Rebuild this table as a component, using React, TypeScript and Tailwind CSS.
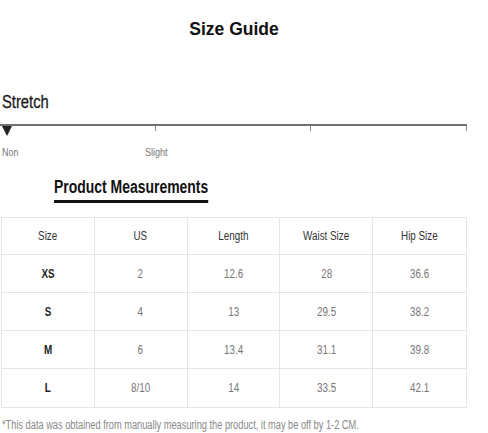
import React from 'react';

type Row = {
  size: string;
  us: string;
  length: string;
  waist: string;
  hip: string;
};

const rows: Row[] = [
  { size: 'XS', us: '2', length: '12.6', waist: '28', hip: '36.6' },
  { size: 'S', us: '4', length: '13', waist: '29.5', hip: '38.2' },
  { size: 'M', us: '6', length: '13.4', waist: '31.1', hip: '39.8' },
  { size: 'L', us: '8/10', length: '14', waist: '33.5', hip: '42.1' },
];

// condensed look: no narrow font installed, so squeeze Liberation Sans
const Cell: React.FC<{ children: React.ReactNode; className?: string }> = ({ children, className }) => (
  <div className="flex items-center justify-center border-r border-[#e6e6e6] last:border-r-0">
    <span className={`inline-block scale-x-[0.82] ${className ?? ''}`}>{children}</span>
  </div>
);

const App: React.FC = () => {
  return (
    <div className="w-[488px] h-[433px] bg-white overflow-hidden font-['Liberation_Sans',Arial,sans-serif]">
      {/* Title */}
      <div className="pt-[17px] flex justify-center pr-[20px]">
        <h1 className="font-bold text-[17.5px] leading-[24px] text-[#111]">Size Guide</h1>
      </div>

      {/* Stretch */}
      <div className="mt-[50px] pl-[2px] text-[18px] leading-[22px] text-[#1a1a1a]">
        <span className="inline-block origin-left scale-x-[0.82] [-webkit-text-stroke:0.3px_#1a1a1a]">Stretch</span>
      </div>

      <div className="mt-[11px] w-[467px]">
        <div className="flex border-t-2 border-[#707070]">
          <div className="flex-1 h-[5px] border-r border-[#8a8a8a]" />
          <div className="flex-1 h-[5px] border-r border-[#8a8a8a]" />
          <div className="flex-1 h-[5px] border-r border-[#8a8a8a]" />
        </div>
        <div className="-mt-[5px] pl-[2px] leading-none">
          <svg width="10" height="10" viewBox="0 0 10 10" className="block">
            <polygon points="0,0 10,0 5,10" fill="#222" />
          </svg>
        </div>
        <div className="flex mt-[9px] text-[11px] leading-[14px] text-[#777]">
          <span className="pl-[2px] w-[145px]">
            <span className="inline-block origin-left scale-x-[0.82]">Non</span>
          </span>
          <span className="inline-block origin-left scale-x-[0.82]">Slight</span>
        </div>
      </div>

      {/* Product Measurements */}
      <div className="mt-[17px] pl-[54px]">
        <div className="inline-block origin-left scale-x-[0.775] font-bold text-[18px] leading-[22px] text-[#111] border-b-[3px] border-[#111] pb-[2px]">
          Product Measurements
        </div>
      </div>

      <div className="mt-[14px] ml-[1px] w-[466px] border border-[#e6e6e6]">
        <div className="grid grid-cols-5 h-[37px] border-b border-[#e6e6e6] text-[12px] text-[#333]">
          <Cell>Size</Cell>
          <Cell>US</Cell>
          <Cell>Length</Cell>
          <Cell>Waist Size</Cell>
          <Cell>Hip Size</Cell>
        </div>
        {rows.map((r, i) => (
          <div
            key={r.size}
            className={`grid grid-cols-5 h-[38px] text-[12px] text-[#777] ${i < rows.length - 1 ? 'border-b border-[#e6e6e6]' : ''}`}
          >
            <Cell className="font-bold text-[#222]">{r.size}</Cell>
            <Cell>{r.us}</Cell>
            <Cell>{r.length}</Cell>
            <Cell>{r.waist}</Cell>
            <Cell>{r.hip}</Cell>
          </div>
        ))}
      </div>

      <p className="mt-[10px] pl-[2px] text-[12px] leading-[14px] text-[#888] whitespace-nowrap">
        <span className="inline-block origin-left scale-x-[0.77]">
          *This data was obtained from manually measuring the product, it may be off by 1-2 CM.
        </span>
      </p>
    </div>
  );
};

export default App;
